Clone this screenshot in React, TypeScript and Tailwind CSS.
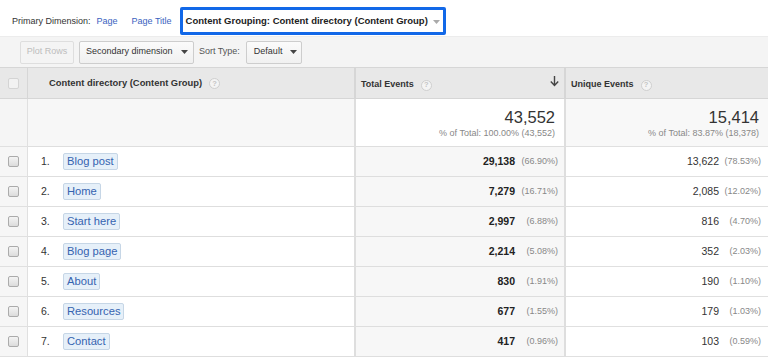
import React from "react";

const rows = [
  { n: 1, label: "Blog post", te: "29,138", tp: "(66.90%)", ue: "13,622", up: "(78.53%)" },
  { n: 2, label: "Home", te: "7,279", tp: "(16.71%)", ue: "2,085", up: "(12.02%)" },
  { n: 3, label: "Start here", te: "2,997", tp: "(6.88%)", ue: "816", up: "(4.70%)" },
  { n: 4, label: "Blog page", te: "2,214", tp: "(5.08%)", ue: "352", up: "(2.03%)" },
  { n: 5, label: "About", te: "830", tp: "(1.91%)", ue: "190", up: "(1.10%)" },
  { n: 6, label: "Resources", te: "677", tp: "(1.55%)", ue: "179", up: "(1.03%)" },
  { n: 7, label: "Contact", te: "417", tp: "(0.96%)", ue: "103", up: "(0.59%)" },
];

function Help() {
  return (
    <span className="ml-[7px] inline-flex h-[11px] w-[11px] items-center justify-center rounded-full border border-[#cfcfcf] bg-[#f4f4f4] text-[7.5px] font-bold leading-none text-[#c4c4c4]">
      ?
    </span>
  );
}

function Check({ light }: { light?: boolean }) {
  return (
    <span
      className={
        "block h-[11px] w-[11px] rounded-[2px] border " +
        (light
          ? "border-[#d4d4d4] bg-[#f2f2f2]"
          : "border-[#ababab] bg-gradient-to-b from-[#f4f4f4] to-[#dcdcdc]")
      }
    />
  );
}

function Caret() {
  return (
    <svg width="7" height="4" viewBox="0 0 7 4" className="ml-[8px]">
      <path d="M0 0h7L3.5 4z" fill="#444" />
    </svg>
  );
}

export default function App() {
  return (
    <div
      className="h-[358px] w-[768px] overflow-hidden bg-white text-[#333]"
      style={{ fontFamily: '"Liberation Sans", Arial, sans-serif' }}
    >
      {/* Primary dimension bar */}
      <div className="flex h-[36px] items-start pl-[12px] pt-[7px] text-[9px]">
        <div className="flex h-[28px] items-center pt-[1px]">
          <span className="text-[#333]">Primary Dimension:</span>
          <span className="ml-[6px] text-[#3a63c0]">Page</span>
          <span className="ml-[14px] text-[#3a63c0]">Page Title</span>
        </div>
        <div className="ml-[8px] flex h-[28px] w-[266px] items-center rounded-[2px] border-[3px] border-[#1268e8] pl-[3px] pt-[1px]">
          <span className="text-[9.5px] font-bold text-[#222]">Content Grouping: Content directory (Content Group)</span>
          <svg width="7" height="4" viewBox="0 0 7 4" className="ml-[5px]">
            <path d="M0 0h7L3.5 4z" fill="#aaa" />
          </svg>
        </div>
      </div>

      {/* Toolbar */}
      <div className="flex h-[31px] items-center border-t border-[#ececec] bg-[#f4f4f4] pl-[20px] text-[9px]">
        <div className="flex h-[23px] w-[54px] items-center justify-center rounded-[2px] border border-[#dedede] bg-[#f4f4f4] text-[#bdbdbd]">
          Plot Rows
        </div>
        <div className="ml-[5px] flex h-[23px] w-[115px] items-center rounded-[2px] border border-[#cdcdcd] bg-gradient-to-b from-[#fbfbfb] to-[#f0f0f0] pl-[6px] text-[#333]">
          Secondary dimension
          <Caret />
        </div>
        <span className="ml-[5px] text-[#555]">Sort Type:</span>
        <div className="ml-[6px] flex h-[23px] w-[56px] items-center rounded-[2px] border border-[#cdcdcd] bg-gradient-to-b from-[#fbfbfb] to-[#f0f0f0] pl-[7px] text-[#333]">
          Default
          <Caret />
        </div>
      </div>

      {/* Table */}
      <div className="grid grid-cols-[28px_328px_210px_1fr]">
        {/* Header */}
        <div className="flex h-[32px] items-center justify-center border-t border-b border-r border-[#d6d6d6] bg-[#e8e8e8]">
          <Check light />
        </div>
        <div className="flex h-[32px] items-center border-t border-b border-r-2 border-[#d6d6d6] bg-[#e8e8e8] pl-[21px] pt-[1px] text-[9.4px] font-bold text-[#333]">
          Content directory (Content Group)
          <Help />
        </div>
        <div className="flex h-[32px] items-center border-t border-b border-r-2 border-[#d6d6d6] bg-[#e8e8e8] pl-[5px] pr-[5px] text-[9px] font-bold text-[#333]">
          <span className="pt-[4px]">Total Events</span>
          <span className="pt-[4px]"><Help /></span>
          <svg width="9" height="11" viewBox="0 0 9 11" className="ml-auto mb-[3px]">
            <path d="M4.5 0v9M0.8 5.5l3.7 4 3.7-4" stroke="#444" strokeWidth="1.4" fill="none" />
          </svg>
        </div>
        <div className="flex h-[32px] items-center border-t border-b border-[#d6d6d6] bg-[#e8e8e8] pl-[5px] pt-[4px] text-[9px] font-bold text-[#333]">
          Unique Events
          <Help />
        </div>

        {/* Summary */}
        <div className="h-[48px] border-r border-b border-[#e0e0e0] bg-[#f5f5f5]" />
        <div className="h-[48px] border-r-2 border-b border-[#dedede] bg-[#f7f7f7]" />
        <div className="flex h-[48px] flex-col items-end border-r-2 border-b border-[#dedede] bg-white pr-[9px] pt-[9px]">
          <span className="text-[16.5px] leading-[19px] text-[#333]">43,552</span>
          <span className="mt-[1px] text-[9px] leading-[11px] text-[#888]">% of Total: 100.00% (43,552)</span>
        </div>
        <div className="flex h-[48px] flex-col items-end border-b border-[#e0e0e0] bg-[#f8f8f8] pr-[9px] pt-[9px]">
          <span className="text-[16.5px] leading-[19px] text-[#333]">15,414</span>
          <span className="mt-[1px] text-[9px] leading-[11px] text-[#888]">% of Total: 83.87% (18,378)</span>
        </div>

        {/* Rows */}
        {rows.map((r) => (
          <React.Fragment key={r.n}>
            <div className="flex h-[30px] items-center justify-center border-r border-b border-[#e0e0e0] bg-[#f6f6f6] pr-[1px]">
              <Check />
            </div>
            <div className="flex h-[30px] items-center border-r-2 border-b border-[#dedede] bg-white pl-[13px]">
              <span className="w-[22px] text-[10.5px] text-[#333]">{r.n}.</span>
              <span className="flex h-[17px] items-center rounded-[2px] border border-[#c6d6e6] bg-[#e6f0f9] px-[3px] text-[11.2px] text-[#3563b0]">
                {r.label}
              </span>
            </div>
            <div className="flex h-[30px] items-center justify-end border-r-2 border-b border-[#dedede] bg-[#f7f7f7] pr-[6px]">
              <span className="text-[10.5px] font-bold text-[#222]">{r.te}</span>
              <span className="w-[43px] text-right text-[9px] text-[#888]">{r.tp}</span>
            </div>
            <div className="flex h-[30px] items-center justify-end border-b border-[#e0e0e0] bg-white pr-[7px]">
              <span className="text-[10.5px] text-[#333]">{r.ue}</span>
              <span className="w-[42px] text-right text-[9px] text-[#888]">{r.up}</span>
            </div>
          </React.Fragment>
        ))}
      </div>
    </div>
  );
}
